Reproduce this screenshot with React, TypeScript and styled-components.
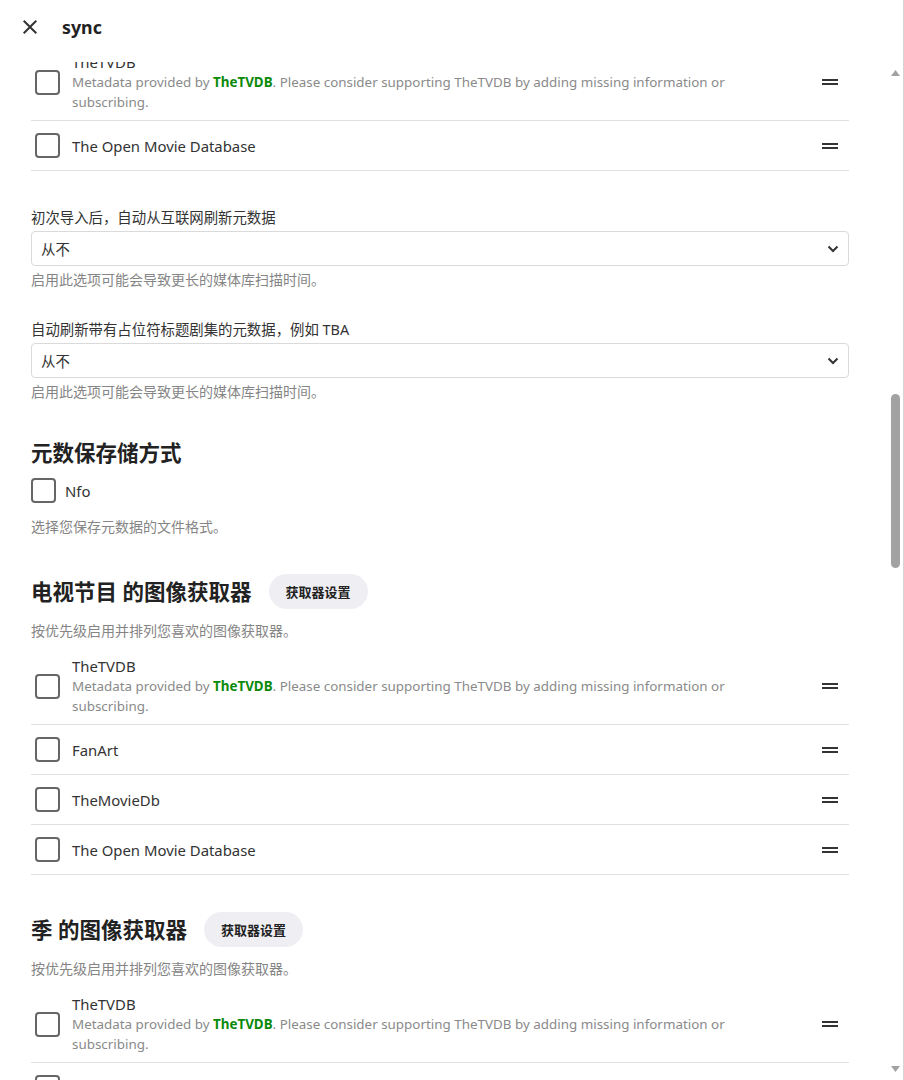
import React, { useLayoutEffect, useRef, useState } from "react";
import styled, { createGlobalStyle } from "styled-components";

const FONT = `"Noto Sans", "Noto Sans CJK SC", sans-serif`;

const GlobalStyle = createGlobalStyle`
  *, *::before, *::after { box-sizing: border-box; }
  html, body { margin: 0; padding: 0; height: 100%; overflow: hidden; background: #fff; }
  body { font-family: ${FONT}; font-size: 14.88px; color: #333; }
  #root { height: 100%; }
`;

const Page = styled.div`
  height: 100%;
  display: flex;
  flex-direction: column;
  border-right: 1px solid #d4d4d4;
  background: #fff;
`;

const Header = styled.header`
  flex: none;
  height: 62px;
  display: flex;
  align-items: flex-start;
  gap: 20px;
  padding: 15px 0 0 18px;
`;

const CloseButton = styled.button`
  width: 24px;
  height: 24px;
  padding: 0;
  border: 0;
  background: none;
  color: #333;
  display: flex;
  cursor: pointer;
`;

const Title = styled.h1`
  margin: 0;
  font-size: 17.8px;
  line-height: 24px;
  font-weight: 700;
  color: #222;
`;

const Body = styled.div`
  flex: 1;
  min-height: 0;
  display: flex;
`;

const Scroller = styled.div`
  flex: 1;
  min-width: 0;
  overflow-y: auto;
  scrollbar-width: none;
  padding: 34px 39px 0 31px;
  &::-webkit-scrollbar {
    display: none;
  }
`;

const ScrollTrack = styled.div`
  flex: none;
  width: 15px;
  display: flex;
  flex-direction: column;
  background: #fff;
`;

const ScrollArrow = styled.div`
  flex: none;
  height: 22px;
  display: flex;
  align-items: center;
  justify-content: center;
`;

const ThumbLane = styled.div`
  flex: 1;
  position: relative;
`;

const Thumb = styled.div`
  position: absolute;
  left: 3px;
  width: 9px;
  border-radius: 5px;
  background: #a2a2a2;
`;

const Section = styled.section`
  margin-bottom: 37px;
`;

const HeadingRow = styled.div`
  display: flex;
  align-items: center;
  gap: 17px;
  margin-bottom: 12px;
`;

const Heading = styled.h2`
  margin: 0;
  font-size: 21.5px;
  line-height: 27px;
  font-weight: 700;
  color: #222;
`;

const PillButton = styled.button`
  height: 35px;
  padding: 0 17px;
  border: 0;
  border-radius: 18px;
  background: #efeff3;
  color: #222;
  font-family: ${FONT};
  font-size: 13px;
  font-weight: 600;
  cursor: pointer;
`;

const Help = styled.div<{ $space?: "list" | "check" }>`
  font-size: 14px;
  line-height: 20px;
  color: #858585;
  margin-top: ${(p) => (p.$space === "check" ? "14px" : "0")};
  margin-bottom: ${(p) => (p.$space === "list" ? "7px" : "0")};
`;

const Field = styled.div`
  & + & {
    margin-top: 30px;
  }
`;

const FieldLabel = styled.label`
  display: block;
  font-size: 14.4px;
  line-height: 20px;
  color: #333;
  margin-bottom: 3px;
`;

const SelectBox = styled.div`
  height: 35px;
  border: 1px solid #dadada;
  border-radius: 4px;
  display: flex;
  align-items: center;
  justify-content: space-between;
  padding: 0 9px 0 9px;
  font-size: 14.4px;
  color: #333;
  background: #fff;
`;

const FieldHelp = styled(Help)`
  margin-top: 4px;
`;

const CheckRow = styled.label`
  display: flex;
  align-items: center;
  gap: 9px;
  font-size: 14.88px;
  line-height: 20px;
  color: #333;
`;

const CheckBox = styled.span`
  flex: none;
  width: 25px;
  height: 25px;
  border: 2px solid #666;
  border-radius: 4px;
`;

const CheckGroup = styled.div`
  display: flex;
  flex-direction: column;
  gap: 9px;
`;

const ListItem = styled.div`
  display: flex;
  align-items: center;
  min-height: 50px;
  padding: 8px 0 8px 4px;
  border-bottom: 1px solid #e0e0e0;
`;

const ItemBody = styled.div`
  flex: 1;
  min-width: 0;
  margin: 0 20px 0 12px;
`;

const ItemTitle = styled.div`
  font-size: 14.88px;
  line-height: 20px;
  color: #333;
`;

const ItemDesc = styled.div`
  font-size: 13.4px;
  line-height: 20px;
  color: #8a8a8a;
`;

const Brand = styled.b`
  color: #0b8a0b;
  font-weight: 700;
`;

const DragHandle = styled.span`
  flex: none;
  width: 38px;
  display: flex;
  justify-content: center;
  color: #333;
`;

const Footer = styled.div`
  padding: 20px 0 42px;
`;

const SubmitButton = styled.button`
  width: 100%;
  height: 40px;
  border: 0;
  border-radius: 4px;
  background: #00a4dc;
  color: #fff;
  font-family: ${FONT};
  font-size: 15px;
  font-weight: 600;
`;

const Chevron = () => (
  <svg width="12" height="8" viewBox="0 0 12 8" aria-hidden="true">
    <polyline points="1.5,1.5 6,6 10.5,1.5" fill="none" stroke="#333" strokeWidth="2" />
  </svg>
);

const CloseIcon = () => (
  <svg width="24" height="24" viewBox="0 0 24 24" aria-hidden="true">
    <path
      fill="currentColor"
      d="M19 6.41L17.59 5 12 10.59 6.41 5 5 6.41 10.59 12 5 17.59 6.41 19 12 13.41 17.59 19 19 17.59 13.41 12z"
    />
  </svg>
);

const HandleIcon = () => (
  <svg width="24" height="24" viewBox="0 0 24 24" aria-hidden="true">
    <path fill="currentColor" d="M20 9H4v2h16V9zM4 15h16v-2H4v2z" />
  </svg>
);

const ArrowIcon = ({ down }: { down?: boolean }) => (
  <svg width="9" height="6" viewBox="0 0 9 6" aria-hidden="true">
    <polygon points={down ? "0,0 9,0 4.5,6" : "4.5,0 9,6 0,6"} fill="#a2a2a2" />
  </svg>
);

type Item = { name: string; tvdb?: boolean };

const TVDB: Item = { name: "TheTVDB", tvdb: true };
const TMDB: Item = { name: "TheMovieDb" };
const OMDB: Item = { name: "The Open Movie Database" };
const FANART: Item = { name: "FanArt" };

const FetcherRow = ({ item, rowRef }: { item: Item; rowRef?: React.Ref<HTMLDivElement> }) => (
  <ListItem ref={rowRef}>
    <CheckBox />
    <ItemBody>
      <ItemTitle>{item.name}</ItemTitle>
      {item.tvdb && (
        <ItemDesc>
          Metadata provided by <Brand>TheTVDB</Brand>. Please consider supporting TheTVDB by adding
          missing information or subscribing.
        </ItemDesc>
      )}
    </ItemBody>
    <DragHandle>
      <HandleIcon />
    </DragHandle>
  </ListItem>
);

const FetcherSection = ({
  title,
  help,
  items,
  button,
  anchor,
  rowRef,
}: {
  title: string;
  help: string;
  items: Item[];
  button?: string;
  anchor?: number;
  rowRef?: React.Ref<HTMLDivElement>;
}) => (
  <Section>
    <HeadingRow>
      <Heading>{title}</Heading>
      {button && <PillButton type="button">{button}</PillButton>}
    </HeadingRow>
    <Help $space="list">{help}</Help>
    <div>
      {items.map((it, i) => (
        <FetcherRow key={it.name + i} item={it} rowRef={i === anchor ? rowRef : undefined} />
      ))}
    </div>
  </Section>
);

const SelectField = ({ label, value, help }: { label: string; value: string; help?: string }) => (
  <Field>
    <FieldLabel>{label}</FieldLabel>
    <SelectBox>
      <span>{value}</span>
      <Chevron />
    </SelectBox>
    {help && <FieldHelp>{help}</FieldHelp>}
  </Field>
);

const CheckField = ({ label, help }: { label: string; help?: string }) => (
  <Field>
    <CheckRow>
      <CheckBox />
      <span>{label}</span>
    </CheckRow>
    {help && <Help $space="check">{help}</Help>}
  </Field>
);

const LANGS = [
  "Afrikaans", "Arabic", "Basque", "Bengali", "Bosnian", "Bulgarian", "Catalan", "Chinese",
  "Chinese (Hong Kong)", "Chinese (Traditional)", "Croatian", "Czech", "Danish", "Dutch", "English",
  "Estonian", "Finnish", "French", "Galician", "German", "Greek", "Hebrew", "Hindi", "Hungarian",
  "Icelandic", "Indonesian", "Italian", "Japanese", "Korean", "Latvian", "Lithuanian", "Macedonian",
  "Malay", "Norwegian", "Persian", "Polish", "Portuguese", "Portuguese (Brazil)", "Romanian", "Russian",
  "Serbian", "Slovak", "Slovenian", "Spanish", "Spanish (Latin America)", "Swedish", "Tagalog", "Thai",
  "Turkish", "Ukrainian", "Vietnamese",
];

const REFRESH_HELP = "启用此选项可能会导致更长的媒体库扫描时间。";
const IMG_HELP = "按优先级启用并排列您喜欢的图像获取器。";
const META_HELP = "按优先级启用并排列您喜欢的元数据下载器。优先级较低的下载器只会用于填补缺失的信息。";

export default function App() {
  const scrollRef = useRef<HTMLDivElement>(null);
  const anchorRef = useRef<HTMLDivElement>(null);
  const laneRef = useRef<HTMLDivElement>(null);
  const [thumb, setThumb] = useState({ top: 0, height: 0 });

  const updateThumb = () => {
    const s = scrollRef.current;
    const lane = laneRef.current;
    if (!s || !lane) return;
    const track = lane.clientHeight;
    const range = Math.max(1, s.scrollHeight - s.clientHeight);
    const height = Math.max(20, (track * s.clientHeight) / s.scrollHeight);
    const top = ((track - height) * s.scrollTop) / range;
    setThumb({ top, height });
  };

  useLayoutEffect(() => {
    const place = () => {
      const s = scrollRef.current;
      const a = anchorRef.current;
      if (!s || !a) return;
      const off = a.getBoundingClientRect().top - s.getBoundingClientRect().top + s.scrollTop;
      s.scrollTop = off + 18;
      updateThumb();
    };
    place();
    if (document.fonts && document.fonts.ready) document.fonts.ready.then(place);
  }, []);

  return (
    <>
      <GlobalStyle />
      <Page>
        <Header>
          <CloseButton type="button" aria-label="关闭">
            <CloseIcon />
          </CloseButton>
          <Title>sync</Title>
        </Header>
        <Body>
          <Scroller ref={scrollRef} onScroll={updateThumb}>
            <Section>
              <SelectField label="内容类型" value="节目" />
              <SelectField label="显示名称" value="sync" />
            </Section>

            <Section>
              <HeadingRow>
                <Heading>文件夹</Heading>
                <PillButton type="button">添加</PillButton>
              </HeadingRow>
              <ListItem>
                <ItemBody>
                  <ItemTitle>/media/sync</ItemTitle>
                </ItemBody>
              </ListItem>
            </Section>

            <Section>
              <CheckGroup>
                <CheckField label="启用媒体库" help="禁用此媒体库将在 UI 中隐藏它。" />
                <CheckField label="启用实时监控" help="在支持的文件系统上，文件的更改将会被立即处理。" />
                <CheckField label="自动合并分布在多个文件夹中的剧集" help="启用后，分布在多个文件夹中的同一剧集将自动合并为一个剧集。" />
                <CheckField label="显示缺失的季和集" help="在媒体库中显示数据库里存在但本地缺失的季和集。" />
              </CheckGroup>
            </Section>

            <Section>
              <SelectField label="首选的元数据下载语言" value="Chinese" help="下载元数据时优先使用的语言。" />
              <SelectField label="国家/地区" value="China" />
              <SelectField label="季号文件夹格式" value="季 %s" help="用于命名季文件夹的格式。" />
            </Section>

            <Section>
              <SelectField label="剧集显示顺序" value="播出顺序" help="选择剧集的默认排序方式。" />
            </Section>

            <FetcherSection title="剧集 的元数据下载器" help={META_HELP} items={[TMDB, TVDB, OMDB]} />
            <FetcherSection title="季 的元数据下载器" help={META_HELP} items={[TMDB, TVDB]} />
            <FetcherSection
              title="集 的元数据下载器"
              help={META_HELP}
              items={[TMDB, TVDB, OMDB]}
              anchor={1}
              rowRef={anchorRef}
            />

            <Section>
              <SelectField label="初次导入后，自动从互联网刷新元数据" value="从不" help={REFRESH_HELP} />
              <SelectField label="自动刷新带有占位符标题剧集的元数据，例如 TBA" value="从不" help={REFRESH_HELP} />
            </Section>

            <Section>
              <HeadingRow>
                <Heading>元数保存储方式</Heading>
              </HeadingRow>
              <CheckRow>
                <CheckBox />
                <span>Nfo</span>
              </CheckRow>
              <Help $space="check">选择您保存元数据的文件格式。</Help>
            </Section>

            <FetcherSection
              title="电视节目 的图像获取器"
              button="获取器设置"
              help={IMG_HELP}
              items={[TVDB, FANART, TMDB, OMDB]}
            />
            <FetcherSection title="季 的图像获取器" button="获取器设置" help={IMG_HELP} items={[TVDB, FANART, TMDB]} />
            <FetcherSection
              title="集 的图像获取器"
              button="获取器设置"
              help={IMG_HELP}
              items={[TVDB, TMDB, OMDB, { name: "Embedded Image Extractor" }, { name: "Screen Grabber" }]}
            />

            <Section>
              <HeadingRow>
                <Heading>字幕下载</Heading>
              </HeadingRow>
              <FieldLabel>下载语言</FieldLabel>
              <CheckGroup>
                {LANGS.map((l) => (
                  <CheckRow key={l}>
                    <CheckBox />
                    <span>{l}</span>
                  </CheckRow>
                ))}
              </CheckGroup>
            </Section>

            <FetcherSection
              title="字幕下载器"
              help="按优先级启用并排列您喜欢的字幕下载器。"
              items={[{ name: "Open Subtitles" }]}
            />

            <Section>
              <CheckGroup>
                <CheckField label="如果视频已经包含嵌入字幕则跳过" help="保留文本格式的字幕将会使视频的传输更有效率，并降低视频转码的可能。" />
                <CheckField label="如果默认音轨语言与下载语言相同则跳过" help="取消此项将确保所有视频都有字幕，无论音频语言如何。" />
                <CheckField label="仅下载完美匹配的字幕" help="只有与视频文件完全匹配的字幕才会被下载。" />
              </CheckGroup>
            </Section>

            <Footer>
              <SubmitButton type="button">确定</SubmitButton>
            </Footer>
          </Scroller>
          <ScrollTrack aria-hidden="true">
            <ScrollArrow>
              <ArrowIcon />
            </ScrollArrow>
            <ThumbLane ref={laneRef}>
              <Thumb style={{ top: thumb.top, height: thumb.height }} />
            </ThumbLane>
            <ScrollArrow>
              <ArrowIcon down />
            </ScrollArrow>
          </ScrollTrack>
        </Body>
      </Page>
    </>
  );
}
